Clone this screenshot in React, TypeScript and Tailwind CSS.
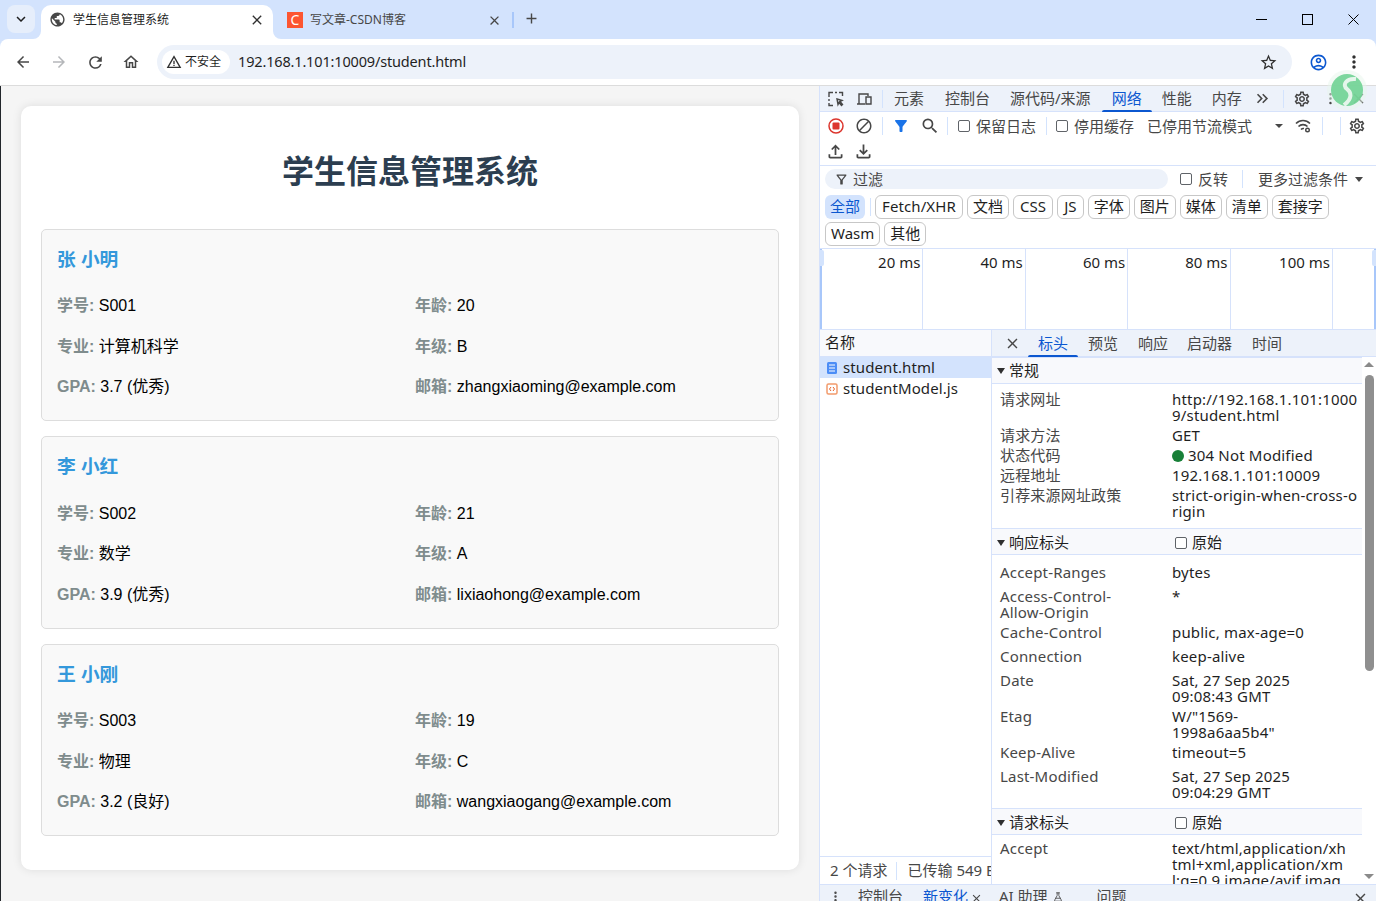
import { EllipsisVertical, FlaskConical } from "lucide-react";
import type { ReactNode } from "react";
import {
  MdAdd, MdArrowBack, MdArrowForward, MdBlock, MdClose, MdFilterAlt, MdKeyboardArrowDown, MdKeyboardDoubleArrowRight,
  MdMoreVert, MdOutlineAccountCircle, MdOutlineFileDownload, MdOutlineFileUpload, MdOutlineFilterAlt, MdOutlineHome,
  MdOutlineSettings, MdPublic, MdRefresh, MdSearch, MdStarBorder, MdWarningAmber,
} from "react-icons/md";

const students = [
  { name: "张 小明", id: "S001", age: "20", major: "计算机科学", grade: "B", gpa: "3.7 (优秀)", email: "zhangxiaoming@example.com" },
  { name: "李 小红", id: "S002", age: "21", major: "数学", grade: "A", gpa: "3.9 (优秀)", email: "lixiaohong@example.com" },
  { name: "王 小刚", id: "S003", age: "19", major: "物理", grade: "C", gpa: "3.2 (良好)", email: "wangxiaogang@example.com" },
];

const chipsOne = ["Fetch/XHR", "文档", "CSS", "JS", "字体", "图片", "媒体", "清单", "套接字"];
const ticks = ["20 ms", "40 ms", "60 ms", "80 ms", "100 ms"];

const sans = "font-['Noto_Sans','Noto_Sans_CJK_SC',sans-serif]";
const page = "font-['Liberation_Sans','Noto_Sans_CJK_SC',sans-serif]";

function Field({ label, value }: { label: string; value: string }) {
  return (
    <div className="h-[30.5px] text-[16px] leading-[30.5px] text-black">
      <span className="font-bold text-[#7f8c8d]">{label}:</span> {value}
    </div>
  );
}

function StudentCard({ s }: { s: (typeof students)[number] }) {
  return (
    <div className="rounded-[5px] border border-[#ddd] bg-[#f9f9f9] px-[15px] pt-[16px] pb-[17.6px]">
      <h3 className="h-[28px] text-[18.72px] leading-[28px] font-bold text-[#3498db]">{s.name}</h3>
      <div className="mt-[17.4px] grid grid-cols-2 gap-[10px]">
        <Field label="学号" value={s.id} />
        <Field label="年龄" value={s.age} />
        <Field label="专业" value={s.major} />
        <Field label="年级" value={s.grade} />
        <Field label="GPA" value={s.gpa} />
        <Field label="邮箱" value={s.email} />
      </div>
    </div>
  );
}

function Check({ className = "" }: { className?: string }) {
  return <span className={`inline-block h-[12px] w-[12px] shrink-0 rounded-[2px] border border-[#5f6368] bg-white ${className}`} />;
}

function Sep({ className = "" }: { className?: string }) {
  return <span className={`h-[18px] w-px shrink-0 bg-[#d3e3fd] ${className}`} />;
}

// keeps a slot of fixed width so the bigger material glyphs don't push the row around
function Ico({ className = "", children }: { className?: string; children: ReactNode }) {
  return <span className={`flex shrink-0 items-center justify-center ${className}`}>{children}</span>;
}

function Row({ k, v, tight, brk }: { k: string; v: ReactNode; tight?: boolean; brk?: boolean }) {
  return (
    <div className={`flex pb-[4px] text-[15px] leading-[16px] ${tight ? "" : "min-h-[24px]"}`}>
      <div className="w-[172px] shrink-0 pr-[20px] tracking-[0.18px] text-[#474747]">{k}</div>
      <div className={`tracking-[0.18px] text-[#1f1f1f] ${brk ? "break-all" : ""} ${tight ? "w-[188px]" : "w-[176px]"}`}>{v}</div>
    </div>
  );
}

function SectionHead({ title, raw }: { title: string; raw?: boolean }) {
  return (
    <div className={`flex h-[27px] items-center border-y border-[#d6e2fb] bg-[#f8f9fc] pl-[5px] text-[15px] text-[#1f1f1f] ${raw ? "pt-[2px]" : ""}`}>
      <span className="h-0 w-0 border-x-[4px] border-t-[6px] border-x-transparent border-t-[#303030]" />
      <span className="ml-[4px] w-[166px]">{title}</span>
      {raw && (
        <>
          <Check />
          <span className="ml-[5px]">原始</span>
        </>
      )}
    </div>
  );
}

function Corner({ side }: { side: "l" | "r" }) {
  return (
    <svg width="8" height="8" viewBox="0 0 8 8" className={`absolute bottom-0 ${side === "l" ? "-left-2" : "-right-2"}`}>
      <path d={side === "l" ? "M8 0V8H0A8 8 0 0 0 8 0Z" : "M0 0V8H8A8 8 0 0 1 0 0Z"} fill="#fff" />
    </svg>
  );
}

function WindowButtons() {
  return (
    <div className="mb-[6px] ml-auto flex h-[28px] items-center text-black">
      <div className="flex w-[46px] justify-center">
        <svg width="11" height="11" viewBox="0 0 11 11"><path d="M0 5.5h11" stroke="currentColor" strokeWidth="1" /></svg>
      </div>
      <div className="flex w-[46px] justify-center">
        <svg width="11" height="11" viewBox="0 0 11 11"><rect x="0.5" y="0.5" width="10" height="10" fill="none" stroke="currentColor" strokeWidth="1" /></svg>
      </div>
      <div className="flex w-[46px] justify-center">
        <svg width="11" height="11" viewBox="0 0 11 11"><path d="M0.5 0.5l10 10M10.5 0.5l-10 10" stroke="currentColor" strokeWidth="1" /></svg>
      </div>
    </div>
  );
}

function TabBar() {
  return (
    <div className={`flex h-[39px] items-end bg-[#d3e3fd] text-[12px] ${sans}`}>
      <div className="mb-[6px] ml-[7px] flex h-[28px] w-[28px] items-center justify-center rounded-lg bg-[#e6eefb]">
        <MdKeyboardArrowDown size={18} className="text-[#1f1f1f]" />
      </div>
      <div className="relative ml-[6px] flex h-[34px] w-[232px] items-center rounded-t-[10px] bg-white pr-[10px] pb-[5px] pl-[9px] text-[#1f1f1f]">
        <Corner side="l" />
        <Corner side="r" />
        <Ico className="w-[14px]"><MdPublic size={17} className="shrink-0 text-[#474747]" /></Ico>
        <span className="ml-[9px] flex-1">学生信息管理系统</span>
        <Ico className="w-[12px]"><MdClose size={16} className="shrink-0 text-[#303030]" /></Ico>
      </div>
      <div className="mb-[5px] flex h-[28px] w-[239px] items-center pr-[12px] pl-[14px] text-[#474747]">
        <span className="flex h-[16px] w-[16px] shrink-0 items-center justify-center bg-[#fc5531] text-[14px] leading-none text-white">C</span>
        <span className="ml-[7px] flex-1">写文章-CSDN博客</span>
        <Ico className="w-[12px]"><MdClose size={15} className="shrink-0 text-[#474747]" /></Ico>
      </div>
      <span className="mb-[11px] h-[16px] w-[2px] bg-[#a8c7fa]" />
      <Ico className="mb-[12px] ml-[10px] w-[15px]"><MdAdd size={17} className="shrink-0 text-[#474747]" /></Ico>
      <WindowButtons />
    </div>
  );
}

function ToolBar() {
  return (
    <div className={`flex h-[46px] items-center rounded-t-lg bg-white pl-[5px] ${sans}`}>
      <div className="flex h-9 w-9 items-center justify-center"><MdArrowBack size={18} className="text-[#474747]" /></div>
      <div className="flex h-9 w-9 items-center justify-center"><MdArrowForward size={18} className="text-[#b5b7ba]" /></div>
      <div className="flex h-9 w-9 items-center justify-center"><MdRefresh size={19} className="text-[#474747]" /></div>
      <div className="flex h-9 w-9 items-center justify-center"><MdOutlineHome size={18} className="text-[#474747]" /></div>
      <div className="ml-2 flex h-[34px] flex-1 items-center rounded-full bg-[#edf2fa] pr-[16px] pl-[5px]">
        <div className="flex h-[24px] w-[68px] items-center rounded-full bg-white pl-[5px] text-[12px] text-[#1f1f1f]">
          <Ico className="mr-[4px] w-[14px]"><MdWarningAmber size={16} className="shrink-0 text-[#303030]" /></Ico>不安全
        </div>
        <span className="ml-[8px] flex-1 text-[14.5px] tracking-[-0.16px] text-[#1f1f1f]">192.168.1.101:10009/student.html</span>
        <Ico className="w-[15px]"><MdStarBorder size={19} className="shrink-0 text-[#303030]" /></Ico>
      </div>
      <div className="ml-2 flex h-9 w-9 items-center justify-center"><MdOutlineAccountCircle size={19} className="text-[#0b57d0]" /></div>
      <div className="mr-1 flex h-9 w-9 items-center justify-center"><MdMoreVert size={20} className="text-[#303030]" /></div>
    </div>
  );
}

function DevTabs() {
  return (
    <div className="flex h-[26px] shrink-0 items-center border-b border-[#d6e2fb] bg-[#edf2fa] pl-[8px] text-[#474747]">
      <svg width="16" height="16" viewBox="0 0 16 16" fill="none" stroke="#474747" strokeWidth="1.4">
        <path d="M1 6V1.5h4M7 1.5h2M11 1.5h3.500V5M1 8v2M1 12v2.500h4M9 8l5 1.500-2 1 2.500 3-1 1-2.500-3-1 2z" />
      </svg>
      <svg width="16" height="14" viewBox="0 0 16 14" fill="none" stroke="#474747" strokeWidth="1.4" className="ml-[12px]">
        <path d="M1 12h8M3 12V2h9v2M10 5h5v7h-5z" />
      </svg>
      <Sep className="ml-[10px]" />
      <span className="ml-[11px]">元素</span>
      <span className="ml-[21px]">控制台</span>
      <span className="ml-[20px]">源代码/来源</span>
      <span className="relative ml-[21px] text-[#0b57d0]">
        网络
        <span className="absolute -right-[10px] -bottom-[2px] -left-[10px] h-[2px] rounded-t bg-[#0b57d0]" />
      </span>
      <span className="ml-[20px]">性能</span>
      <span className="ml-[20px]">内存</span>
      <Ico className="ml-[13px] w-[15px]"><MdKeyboardDoubleArrowRight size={19} className="shrink-0" /></Ico>
      <Sep className="ml-[13px]" />
      <Ico className="ml-[10px] w-[17px]"><MdOutlineSettings size={18} className="shrink-0" /></Ico>
      <EllipsisVertical size={15} strokeWidth={2} className="ml-[12px]" />
      <Ico className="ml-[13px] w-[15px]"><MdClose size={17} className="shrink-0" /></Ico>
    </div>
  );
}

function DevFilters() {
  return (
    <div className="shrink-0 border-b border-[#d6e2fb] text-[#474747]">
      <div className="flex h-[28px] items-center pl-[8px]">
        <svg width="16" height="16" viewBox="0 0 16 16" className="shrink-0">
          <circle cx="8" cy="8" r="7" fill="none" stroke="#dc362e" strokeWidth="1.5" />
          <rect x="4.5" y="4.5" width="7" height="7" rx="1" fill="#dc362e" />
        </svg>
        <Ico className="ml-[12px] w-[16px]"><MdBlock size={18} className="shrink-0" /></Ico>
        <Sep className="ml-[10px]" />
        <Ico className="ml-[11px] w-[14px]"><MdFilterAlt size={18} className="shrink-0 text-[#1a73e8]" /></Ico>
        <Ico className="ml-[14px] w-[15px]"><MdSearch size={20} className="shrink-0" /></Ico>
        <Sep className="ml-[10px]" />
        <Check className="ml-[10px]" />
        <span className="ml-[6px] w-[60px]">保留日志</span>
        <Sep className="ml-[10px]" />
        <Check className="ml-[9px]" />
        <span className="ml-[6px] w-[60px]">停用缓存</span>
        <span className="ml-[13px] w-[105px] whitespace-nowrap">已停用节流模式</span>
        <span className="ml-[23px] h-0 w-0 border-x-[4px] border-t-[4px] border-x-transparent border-t-[#474747]" />
        <svg width="17" height="14" viewBox="0 0 17 14" fill="none" stroke="#474747" strokeWidth="1.6" className="ml-[12px] shrink-0">
          <path d="M1 4.5c4-4 10-4 14 0M3.5 7.5c2.5-2.5 6.500-2.500 9 0M6 10.500c1-1 2-1.200 3-1" />
          <circle cx="12.500" cy="11" r="1.800" strokeWidth="1.400" />
        </svg>
        <Sep className="ml-[10px]" />
        <Sep className="ml-[17px]" />
        <Ico className="ml-[7px] w-[17px]"><MdOutlineSettings size={18} className="shrink-0" /></Ico>
      </div>
      <div className="flex h-[25px] items-center pb-[3px] pl-[8px]">
        <Ico className="w-[15px]"><MdOutlineFileUpload size={21} className="shrink-0" /></Ico>
        <Ico className="ml-[13px] w-[15px]"><MdOutlineFileDownload size={21} className="shrink-0" /></Ico>
      </div>
    </div>
  );
}

function Chip({ label, latin }: { label: string; latin?: boolean }) {
  return <span className={`flex h-[24px] items-center rounded-[6px] border border-[#c7c7c7] text-[#1f1f1f] ${latin ? "px-[6px] tracking-[0.1px]" : "px-[5px]"}`}>{label}</span>;
}

function FilterBar() {
  return (
    <div className="shrink-0 border-b border-[#d6e2fb] pb-[2px]">
      <div className="flex h-[28px] items-center pb-[2px] pl-[5px]">
        <div className="flex h-[20px] w-[343px] items-center rounded-full bg-[#edf2fa] pl-[10px] text-[#474747]">
          <Ico className="w-[12px]"><MdOutlineFilterAlt size={15} className="shrink-0" /></Ico>
          <span className="ml-[6px]">过滤</span>
        </div>
        <Check className="ml-[12px]" />
        <span className="ml-[6px] text-[#474747]">反转</span>
        <Sep className="ml-[14px]" />
        <span className="ml-[15px] text-[#474747]">更多过滤条件</span>
        <span className="ml-[7px] h-0 w-0 border-x-[4px] border-t-[5px] border-x-transparent border-t-[#474747]" />
      </div>
      <div className="flex h-[25px] items-center gap-[4px] pl-[5px]">
        <span className="flex h-[24px] items-center rounded-[6px] bg-[#d3e3fd] px-[5px] text-[#0b57d0]">全部</span>
        <Sep className="mx-[0.5px]" />
        {chipsOne.map((c, i) => <Chip key={c} label={c} latin={i === 0 || c === "CSS" || c === "JS"} />)}
      </div>
      <div className="mt-[2px] flex h-[25px] items-center gap-[4px] pl-[5px]">
        <Chip label="Wasm" />
        <Chip label="其他" />
      </div>
    </div>
  );
}

function Timeline() {
  return (
    <div className="relative flex h-[81px] shrink-0 border-b border-[#d6e2fb] pl-[1px]">
      {ticks.map((t) => (
        <div key={t} className="w-[102.4px] border-r border-[#d6e2fb] pt-[2px] pr-[2px] text-right text-[#1f1f1f]">{t}</div>
      ))}
      <span className="absolute top-0 left-0 h-full w-[2px] bg-[#a8c7fa]" />
      <span className="absolute top-0 right-0 h-full w-[2px] bg-[#a8c7fa]" />
      <span className="absolute top-[1px] left-0 h-[16px] w-[4px] rounded-r-[2px] bg-[#d3e3fd]" />
      <span className="absolute top-[1px] right-0 h-[16px] w-[4px] rounded-l-[2px] bg-[#d3e3fd]" />
    </div>
  );
}

function RequestList() {
  return (
    <div className="flex w-[172px] shrink-0 flex-col border-r border-[#d6e2fb]">
      <div className="flex h-[27px] shrink-0 items-center border-b border-[#d6e2fb] bg-[#f8f9fc] pb-[2px] pl-[5px] text-[#1f1f1f]">名称</div>
      <div className="flex h-[21px] shrink-0 items-center bg-[#d3e3fd] pl-[6px] tracking-[0.1px] text-[#1f1f1f]">
        <svg width="12" height="12" viewBox="0 0 12 12"><rect x="1" y="0" width="10" height="12" rx="1.5" fill="#4c8df6" /><path d="M3 3h6M3 6h6M3 9h6" stroke="#fff" strokeWidth="1" /></svg>
        <span className="ml-[5px]">student.html</span>
      </div>
      <div className="flex h-[21px] shrink-0 items-center pl-[6px] tracking-[0.1px] text-[#1f1f1f]">
        <svg width="12" height="12" viewBox="0 0 12 12" fill="none"><rect x="1" y="1" width="10" height="10" rx="1.5" stroke="#f29b6c" strokeWidth="1.5" /><path d="M5 4L3.5 6 5 8M7 4l1.5 2L7 8" stroke="#e8622a" strokeWidth="1" /></svg>
        <span className="ml-[5px]">studentModel.js</span>
      </div>
      <div className="mt-auto flex h-[28px] shrink-0 items-center overflow-hidden border-t border-[#d6e2fb] pl-[10px] whitespace-nowrap text-[#474747]">
        2 个请求
        <Sep className="mr-[10px] ml-[9px]" />
        已传输 549 B
      </div>
    </div>
  );
}

function Headers() {
  return (
    <div className="flex min-w-0 flex-1 flex-col">
      <div className="flex h-[27px] shrink-0 items-center border-b border-[#d6e2fb] bg-[#edf2fa] pl-[13px] text-[#474747]">
        <Ico className="mr-[19px] w-[14px]"><MdClose size={17} className="shrink-0" /></Ico>
        <span className="relative text-[#0b57d0]">
          标头
          <span className="absolute -right-[10px] -bottom-[3px] -left-[10px] h-[2px] rounded-t bg-[#0b57d0]" />
        </span>
        <span className="ml-[20px]">预览</span>
        <span className="ml-[20px]">响应</span>
        <span className="ml-[19px]">启动器</span>
        <span className="ml-[20px]">时间</span>
      </div>
      <div className="relative flex min-h-0 flex-1 overflow-hidden">
        <div className="w-[370px] shrink-0">
          <SectionHead title="常规" />
          <div className="pt-[7px] pl-[8px]">
            <Row tight brk k="请求网址" v="http://192.168.1.101:10009/student.html" />
            <Row tight k="请求方法" v="GET" />
            <Row tight k="状态代码" v={<><span className="mr-[4px] inline-block h-[12px] w-[12px] rounded-full bg-[#188038] align-[-1px]" />304 Not Modified</>} />
            <Row tight k="远程地址" v="192.168.1.101:10009" />
            <Row tight brk k="引荐来源网址政策" v="strict-origin-when-cross-origin" />
          </div>
          <div className="mt-[5px]"><SectionHead title="响应标头" raw /></div>
          <div className="pt-[9px] pl-[8px]">
            <Row k="Accept-Ranges" v="bytes" />
            <Row k="Access-Control-Allow-Origin" v="*" />
            <Row k="Cache-Control" v="public, max-age=0" />
            <Row k="Connection" v="keep-alive" />
            <Row k="Date" v="Sat, 27 Sep 2025 09:08:43 GMT" />
            <Row k="Etag" v={<>W/"1569-<br />1998a6aa5b4"</>} />
            <Row k="Keep-Alive" v="timeout=5" />
            <Row k="Last-Modified" v="Sat, 27 Sep 2025 09:04:29 GMT" />
          </div>
          <div className="mt-[4px]"><SectionHead title="请求标头" raw /></div>
          <div className="pt-[5px] pl-[8px]">
            <Row brk k="Accept" v="text/html,application/xhtml+xml,application/xml;q=0.9,image/avif,image/webp" />
          </div>
        </div>
        <div className="flex w-[14px] shrink-0 flex-col items-center bg-white">
          <span className="mt-[5px] h-0 w-0 border-x-[5px] border-b-[5px] border-x-transparent border-b-[#8a8a8a]" />
          <span className="mt-[8px] h-[296px] w-[9px] rounded-full bg-[#8f8f8f]" />
          <span className="mt-auto mb-[5px] h-0 w-0 border-x-[5px] border-t-[5px] border-x-transparent border-t-[#8a8a8a]" />
        </div>
      </div>
    </div>
  );
}

function Drawer() {
  return (
    <div className="flex h-[17px] shrink-0 items-start overflow-hidden border-t border-[#d6e2fb] bg-[#edf2fa] pl-[9px] leading-[23px] text-[#474747]">
      <EllipsisVertical size={13} strokeWidth={2.5} className="mt-[5px] mr-[16px]" />
      <span>控制台</span>
      <span className="ml-[20px] text-[#0b57d0]">新变化</span>
      <Ico className="mt-[7px] ml-[3px] w-[10px]"><MdClose size={13} className="shrink-0" /></Ico>
      <span className="ml-[18px]">AI 助理</span>
      <FlaskConical size={10} className="mt-[7px] ml-[5px]" />
      <span className="ml-[34px]">问题</span>
      <Ico className="mt-[5px] mr-[9px] ml-auto w-[13px]"><MdClose size={17} className="shrink-0" /></Ico>
    </div>
  );
}

export default function App() {
  return (
    <div className="flex h-[901px] w-full flex-col overflow-hidden bg-[#d3e3fd]">
      <TabBar />
      <ToolBar />
      <div className="flex min-h-0 flex-1 border-t border-[#dcdcdc]">
        <div className={`flex w-[819px] shrink-0 bg-[#f5f5f5] ${page}`}>
          <div className="w-px shrink-0 bg-[#22262b]" />
          <div className="pt-[20px] pl-[20px]">
            <div className="w-[778px] rounded-[10px] bg-white px-[20px] pt-[20px] pb-[34px] shadow-[0_0_10px_rgba(0,0,0,0.1)]">
              <h1 className="mt-[22px] mb-[32.8px] h-[48px] text-center text-[32px] leading-[48px] font-bold text-[#2c3e50]">学生信息管理系统</h1>
              <div className="flex flex-col gap-[15px]">
                {students.map((s) => <StudentCard key={s.id} s={s} />)}
              </div>
            </div>
          </div>
        </div>
        <div className={`relative flex min-w-0 flex-1 flex-col border-l border-[#d6e2fb] bg-white text-[15px] ${sans}`}>
          <DevTabs />
          <DevFilters />
          <FilterBar />
          <Timeline />
          <div className="flex min-h-0 flex-1">
            <RequestList />
            <Headers />
          </div>
          <Drawer />
          <div className="absolute top-[-16px] left-[507px] flex h-[40px] w-[40px] items-center justify-center rounded-full bg-[#e8f5ec]/50">
            <svg width="32" height="32" viewBox="0 0 32 32" className="opacity-90">
              <circle cx="16" cy="16" r="16" fill="#70d394" />
              <path d="M25 5C15 4 11 11 16 15c5 4 5 10-3 16" fill="none" stroke="#e4f6ea" strokeWidth="4" />
            </svg>
          </div>
        </div>
      </div>
    </div>
  );
}
